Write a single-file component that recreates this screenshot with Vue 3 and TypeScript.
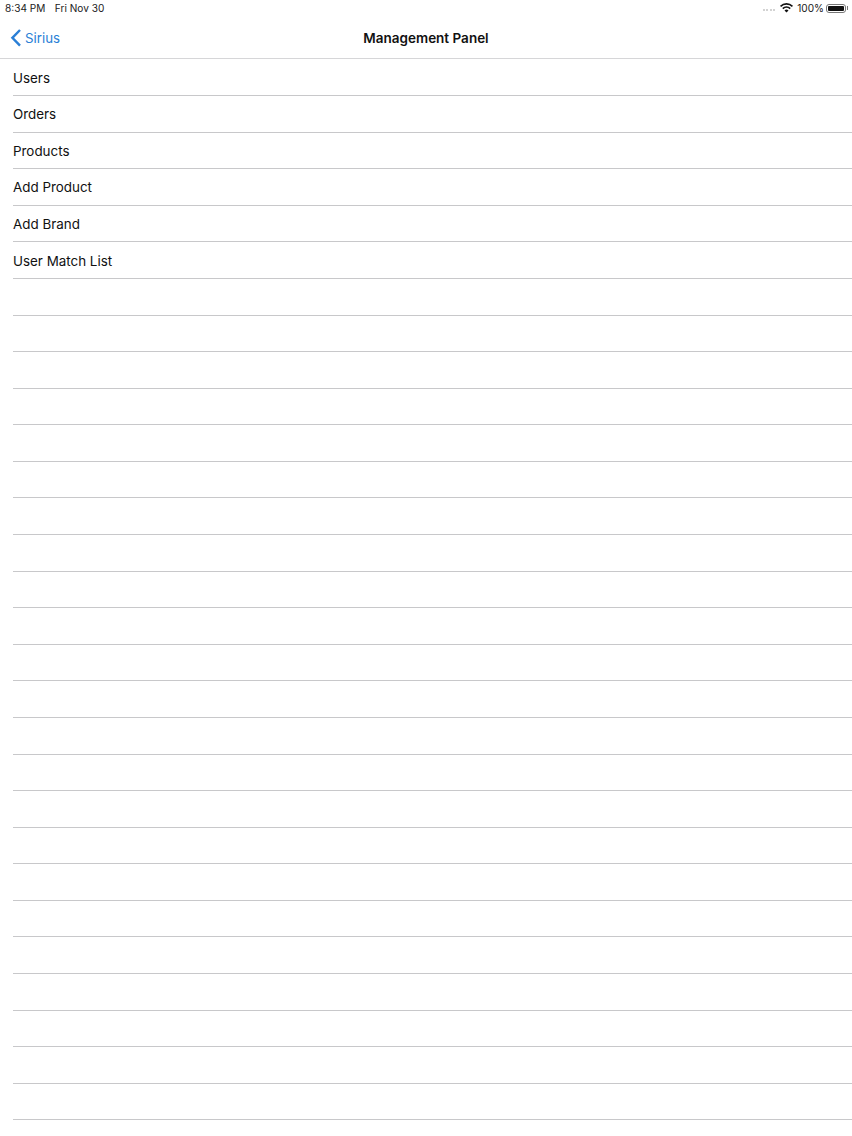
<script setup lang="ts">
const labels: string[] = ['Users', 'Orders', 'Products', 'Add Product', 'Add Brand', 'User Match List']
const rows: string[] = Array.from({ length: 29 }, (_, i) => labels[i] ?? '')
</script>

<template>
  <div class="page">
    <div class="status">
      <div class="status-left">
        <span>8:34 PM</span>
        <span>Fri Nov 30</span>
      </div>
      <div class="status-right">
        <span class="dots"><i></i><i></i><i></i><i></i></span>
        <svg class="wifi" width="13" height="10" viewBox="0 0 13 10">
          <path d="M6.5 9.6 4.5 7.4a2.9 2.9 0 0 1 4 0Z" fill="#111" />
          <path d="M3.4 6.3 2.2 5a6.2 6.2 0 0 1 8.6 0L9.6 6.3a4.5 4.5 0 0 0-6.2 0Z" fill="#111" />
          <path d="M1.1 3.9 0 2.7a9.4 9.4 0 0 1 13 0l-1.1 1.2a7.8 7.8 0 0 0-10.8 0Z" fill="#111" />
        </svg>
        <span class="pct">100%</span>
        <span class="battery"><span class="fill"></span></span>
        <span class="nub"></span>
      </div>
    </div>
    <div class="nav">
      <div class="back">
        <svg width="12" height="20" viewBox="0 0 12 20">
          <path d="M10 2 2.4 9.8 10 17.6" fill="none" stroke="#2a7fd6" stroke-width="2.4" />
        </svg>
        <span>Sirius</span>
      </div>
      <div class="title">Management Panel</div>
    </div>
    <ul class="list">
      <li v-for="(row, i) in rows" :key="i" class="row">{{ row }}</li>
    </ul>
  </div>
</template>

<style>
html, body { margin: 0; background: #fff; }
</style>

<style scoped>
.page {
  width: 852px;
  height: 1136px;
  overflow: hidden;
  background: #fff;
  color: #111;
  font-family: Inter, "Liberation Sans", sans-serif;
}
.status {
  height: 16px;
  display: flex;
  justify-content: space-between;
  align-items: center;
  padding: 0 4px 0 5px;
  font-size: 10.1px;
  color: #222;
}
.status-left { display: flex; gap: 9.5px; }
.status-right { display: flex; align-items: center; }
.dots { display: flex; gap: 1.5px; margin-right: 5px; margin-top: 3px; }
.dots i { width: 2px; height: 2px; border-radius: 50%; background: #c4c4c4; }
.wifi { margin-right: 4px; }
.pct { margin-right: 2px; }
.battery {
  width: 20px;
  height: 9px;
  box-sizing: border-box;
  border: 1px solid #777;
  border-radius: 3px;
  padding: 1px;
  display: flex;
}
.fill { flex: 1; background: #111; border-radius: 1px; }
.nub { width: 1px; height: 4px; background: #777; margin-left: 1px; }
.nav {
  position: relative;
  height: 43px;
  padding-top: 2px;
  box-sizing: border-box;
  border-bottom: 1px solid #d6d6d8;
  display: flex;
  align-items: center;
  justify-content: center;
}
.back {
  position: absolute;
  left: 10px;
  top: 12px;
  display: flex;
  align-items: center;
  gap: 3px;
  color: #2a7fd6;
  font-size: 13.3px;
}
.title { font-size: 13.5px; font-weight: 600; color: #111; }
.list { list-style: none; margin: 0; padding: 0.55px 0 0 13px; }
.row {
  height: 36.58px;
  box-sizing: border-box;
  border-bottom: 1px solid #c8c8ca;
  padding-top: 0.6px;
  display: flex;
  align-items: center;
  font-size: 13.4px;
  color: #111;
}
</style>
